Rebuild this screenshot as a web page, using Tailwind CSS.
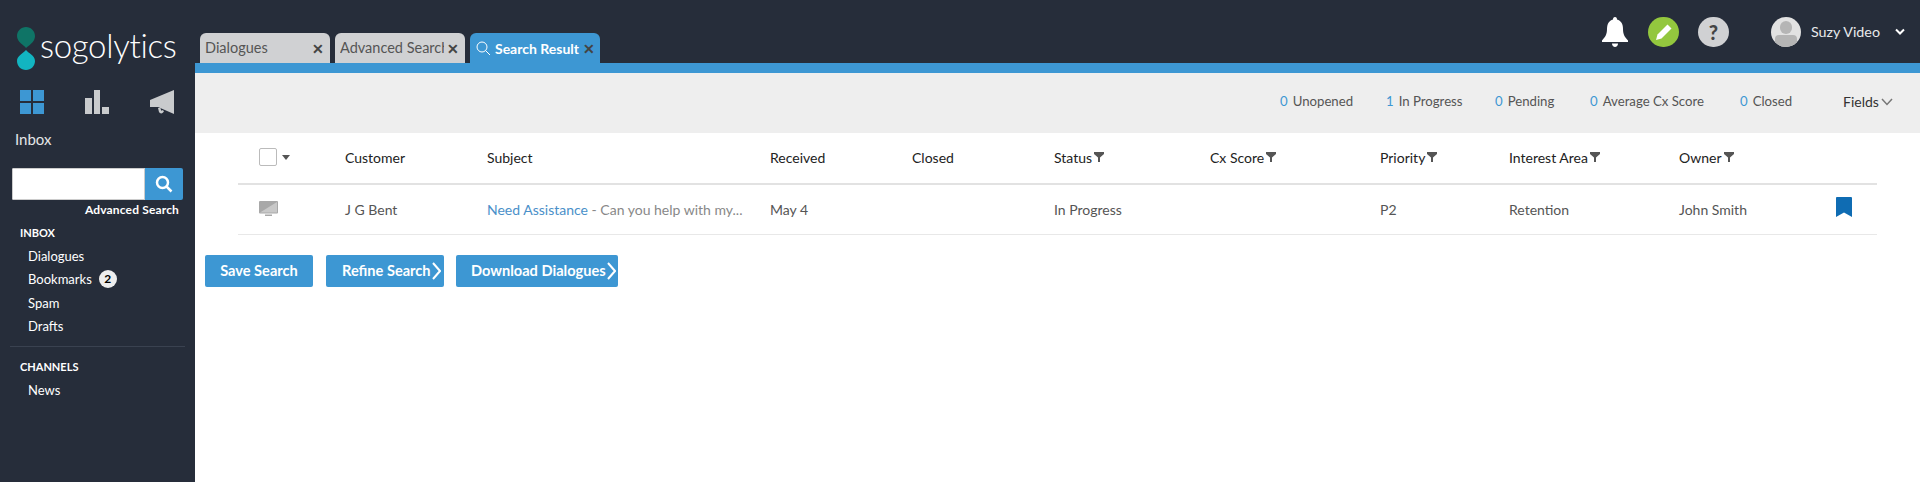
<!DOCTYPE html>
<html lang="en">
<head>
  <meta charset="UTF-8" />
  <title>Sogolytics Inbox</title>
  <script src="https://cdn.jsdelivr.net/npm/@tailwindcss/browser@4"></script>
</head>
<body class="bg-white font-['Lato',sans-serif] text-[13px] text-[#333] overflow-hidden">
<div class="flex h-[482px] w-[1920px]">

  <!-- Sidebar -->
  <aside class="w-[195px] shrink-0 bg-[#262d3a] text-white">
    <div class="flex h-[90px] pl-[17px] pt-[27px]">
      <svg width="18" height="43" viewBox="0 0 18 43" class="shrink-0">
        <path d="M9 0C14 0 18 4 18 9C18 14 14 17 9 21C7 18 0 15 0 9C0 4 4 0 9 0Z" fill="#0f7466"/>
        <path d="M9 23C11 26 18 28 18 34C18 39 14 43 9 43C4 43 0 39 0 34C0 29 5 27 9 23Z" fill="#12b5c1"/>
      </svg>
      <span class="ml-[5px] -mt-[2px] h-[40px] text-[33px] leading-[40px] font-light tracking-[-0.3px]">sogolytics</span>
    </div>
    <div class="flex h-[24px] pl-[20px] gap-[41px]">
      <svg width="24" height="24" viewBox="0 0 24 24" fill="#3d97d3"><rect width="11" height="11"/><rect x="13" width="11" height="11"/><rect y="13" width="11" height="11"/><rect x="13" y="13" width="11" height="11"/></svg>
      <svg width="24" height="24" viewBox="0 0 24 24" fill="#c9cbcd"><rect y="8" width="7" height="16"/><rect x="9" width="6" height="24"/><rect x="17" y="17" width="7" height="7"/></svg>
      <svg width="24" height="24" viewBox="0 0 24 24" fill="#c9cbcd"><path d="M24 0V24L8 17H0V10Z"/><path d="M8 18L9 22C10 24 13 24 14 21L12 20C12 21 11 21 11 20L10.500 18Z"/></svg>
    </div>
    <div class="pl-[15px] mt-[15px] text-[15px] leading-[20px] text-[#e4e6e8]">Inbox</div>
    <div class="flex mx-[12px] mt-[19px] h-[32px] w-[171px] rounded-[2px] overflow-hidden">
      <div class="w-[133px] bg-white border border-[#ccc]"></div>
      <div class="flex-1 bg-[#3d97d3] flex items-center justify-center">
        <svg width="18" height="18" viewBox="0 0 18 18" fill="none" stroke="white" stroke-width="2.500"><circle cx="7.500" cy="7.500" r="5.500"/><path d="M11.500 11.500L16.500 16.500"/></svg>
      </div>
    </div>
    <div class="text-right pr-[16px] mt-[2px] text-[12px] leading-[16px] font-bold tracking-[0.15px]">Advanced Search</div>
    <div class="pl-[20px] mt-[7px] text-[11px] leading-[16px] font-bold">INBOX</div>
    <ul class="pl-[28px] text-[13px] leading-[18px] mt-[6px] space-y-[5.300px]">
      <li>Dialogues</li>
      <li class="flex items-center">Bookmarks <span class="ml-[7px] flex h-[18px] w-[18px] items-center justify-center rounded-full bg-[#eee] text-[12px] font-bold text-black">2</span></li>
      <li>Spam</li>
      <li>Drafts</li>
    </ul>
    <div class="mx-[10px] mt-[11px] border-t border-[#3a4250]"></div>
    <div class="pl-[20px] mt-[12px] text-[11px] leading-[16px] font-bold">CHANNELS</div>
    <div class="pl-[28px] mt-[6px] leading-[18px]">News</div>
  </aside>

  <main class="flex-1 min-w-0">
    <!-- Top bar with tabs -->
    <header class="relative flex h-[63px] items-end bg-[#262d3a] pl-[5px]">
      <div class="flex gap-[5px]">
        <div class="flex h-[30px] w-[130px] items-center justify-between rounded-t-[6px] bg-[#d0d1d3] pl-[5px] pr-[6px] text-[14.500px] text-[#555]">
          <span>Dialogues</span><span class="font-bold text-[#444] text-[14px]">✕</span>
        </div>
        <div class="flex h-[30px] w-[130px] items-center justify-between rounded-t-[6px] bg-[#d0d1d3] pl-[5px] pr-[6px] text-[14.500px] text-[#555]">
          <span class="w-[104px] overflow-hidden whitespace-nowrap">Advanced Search</span><span class="font-bold text-[#444] text-[14px]">✕</span>
        </div>
        <div class="flex h-[30px] w-[130px] items-center justify-between rounded-t-[6px] bg-[#3d97d3] pl-[6px] pr-[5px] text-[14px] font-bold text-white">
          <svg width="15" height="15" viewBox="0 0 15 15" fill="none" stroke="white" stroke-width="1" class="shrink-0"><circle cx="6" cy="6" r="5"/><path d="M9.500 9.500L14 14"/></svg>
          <span class="whitespace-nowrap">Search Result</span><span class="text-[#444] text-[14px]">✕</span>
        </div>
      </div>
      <div class="ml-auto flex items-center self-start pt-[16px] pr-[15px]">
        <svg width="26" height="30" viewBox="0 0 26 30" fill="white" class="mt-[1px]"><path d="M13 0C14.500 0 15 1 15 2.500C19 3.500 21 7 21 12C21 18 23 20 26 23.500V25H0V23.500C3 20 5 18 5 12C5 7 7 3.500 11 2.500C11 1 11.500 0 13 0Z"/><path d="M10 26.500H16C16 28.500 14.500 30 13 30C11.500 30 10 28.500 10 26.500Z"/></svg>
        <div class="ml-[20px] flex h-[30px] w-[31px] items-center justify-center rounded-full bg-[#93c73e]">
          <svg width="18" height="18" viewBox="0 0 18 18" fill="white"><path d="M1 17L2.500 11.500L12.500 1.500L16.500 5.500L6.500 15.500Z"/></svg>
        </div>
        <div class="ml-[19px] flex h-[30px] w-[31px] items-center justify-center rounded-full bg-[#d0d1d3] text-[20px] font-black text-[#444]">?</div>
        <div class="relative ml-[42px] h-[30px] w-[30px] overflow-hidden rounded-full bg-[#e2e2e2]">
          <div class="absolute left-[9px] top-[4px] h-[13px] w-[12px] rounded-full bg-[#b5b5b5]"></div>
          <div class="absolute left-[4px] top-[18px] h-[14px] w-[22px] rounded-t-[4px] bg-[#b5b5b5]"></div>
        </div>
        <span class="ml-[10px] w-[84px] text-[14.300px] text-[#e8e9ea]">Suzy Video</span>
        <svg width="10" height="8" viewBox="0 0 10 8" fill="none" stroke="white" stroke-width="2"><path d="M1 1.500L5 5.500L9 1.500"/></svg>
      </div>
    </header>
    <div class="h-[10px] bg-[#3d97d3]"></div>

    <!-- Stats bar -->
    <div class="flex h-[60px] items-center bg-[#eeeeee] pl-[1085px] pb-[3px] text-[13.200px] text-[#555]">
      <span class="w-[106px]"><b class="font-normal text-[#3d97d3] mr-[5px]">0</b>Unopened</span>
      <span class="w-[109px]"><b class="font-normal text-[#3d97d3] mr-[5px]">1</b>In Progress</span>
      <span class="w-[95px]"><b class="font-normal text-[#3d97d3] mr-[5px]">0</b>Pending</span>
      <span class="w-[150px]"><b class="font-normal text-[#3d97d3] mr-[5px]">0</b>Average Cx Score</span>
      <span class="w-[103px]"><b class="font-normal text-[#3d97d3] mr-[5px]">0</b>Closed</span>
      <span class="flex items-center text-[14px] text-[#333]">Fields
        <svg width="12" height="8" viewBox="0 0 12 8" fill="none" stroke="#777" stroke-width="1.500" class="ml-[2px]"><path d="M1 1L6 6.500L11 1"/></svg>
      </span>
    </div>

    <!-- Results table -->
    <div class="ml-[43px] w-[1639px]">
      <div class="grid h-[52px] pb-[2px] grid-cols-[107px_142px_283px_142px_142px_156px_170px_129px_170px_157px_1fr] items-center border-b-2 border-[#e2e2e2] text-[14px] text-[#222]">
        <div class="flex items-center pl-[21px]">
          <span class="h-[18px] w-[18px] rounded-[2px] border border-[#bbb] bg-white"></span>
          <span class="ml-[5px] h-0 w-0 border-x-[4.500px] border-t-[5px] border-x-transparent border-t-[#555]"></span>
        </div>
        <div>Customer</div>
        <div>Subject</div>
        <div>Received</div>
        <div>Closed</div>
        <div class="flex items-center">Status<svg width="12" height="10" viewBox="0 0 12 10" fill="#555" class="ml-[1px]"><path d="M1 0H11V2L7 5.500V10H5V5.500L1 2Z"/></svg></div>
        <div class="flex items-center">Cx Score<svg width="12" height="10" viewBox="0 0 12 10" fill="#555" class="ml-[1px]"><path d="M1 0H11V2L7 5.500V10H5V5.500L1 2Z"/></svg></div>
        <div class="flex items-center">Priority<svg width="12" height="10" viewBox="0 0 12 10" fill="#555" class="ml-[1px]"><path d="M1 0H11V2L7 5.500V10H5V5.500L1 2Z"/></svg></div>
        <div class="flex items-center">Interest Area<svg width="12" height="10" viewBox="0 0 12 10" fill="#555" class="ml-[1px]"><path d="M1 0H11V2L7 5.500V10H5V5.500L1 2Z"/></svg></div>
        <div class="flex items-center">Owner<svg width="12" height="10" viewBox="0 0 12 10" fill="#555" class="ml-[1px]"><path d="M1 0H11V2L7 5.500V10H5V5.500L1 2Z"/></svg></div>
        <div></div>
      </div>
      <div class="grid h-[50px] grid-cols-[107px_142px_283px_142px_142px_156px_170px_129px_170px_157px_1fr] items-center border-b border-[#e8e8e8] text-[14px] text-[#555]">
        <div class="pl-[21px]">
          <svg width="19" height="16" viewBox="0 0 19 16" class="mb-[2px]"><rect width="19" height="12.500" rx="1" fill="#a8a8a8"/><path d="M1 11.500L18 1V11.500Z" fill="#c8c8c8"/><rect x="6" y="13.500" width="7" height="1.500" fill="#a8a8a8"/></svg>
        </div>
        <div>J G Bent</div>
        <div class="truncate w-[262px] text-[#888]"><span class="text-[#4a90c9]">Need Assistance</span> - Can you help with my...</div>
        <div>May 4</div>
        <div></div>
        <div>In Progress</div>
        <div></div>
        <div>P2</div>
        <div>Retention</div>
        <div>John Smith</div>
        <div>
          <svg width="16" height="20" viewBox="0 0 16 20" fill="#0f6cb3" class="mb-[5px]"><path d="M0 1C0 0.500 0.500 0 1 0H15C15.500 0 16 0.500 16 1V20L8 15.500L0 20Z"/></svg>
        </div>
      </div>
    </div>

    <!-- Actions -->
    <div class="mt-[20px] flex pl-[10px] text-[14.600px] font-bold text-white">
      <button class="h-[32px] w-[108px] rounded-[2px] bg-[#3d97d3]">Save Search</button>
      <button class="ml-[13px] flex h-[32px] w-[118px] items-center rounded-[2px] bg-[#3d97d3] pl-[16px]">Refine Search
        <svg width="9" height="18" viewBox="0 0 9 18" fill="none" stroke="white" stroke-width="2" class="ml-[1px]"><path d="M1 1L8 9L1 17"/></svg>
      </button>
      <button class="ml-[12px] flex h-[32px] w-[162px] items-center rounded-[2px] bg-[#3d97d3] pl-[15px]">Download Dialogues
        <svg width="9" height="18" viewBox="0 0 9 18" fill="none" stroke="white" stroke-width="2" class="ml-[1px]"><path d="M1 1L8 9L1 17"/></svg>
      </button>
    </div>
  </main>
</div>
</body>
</html>
